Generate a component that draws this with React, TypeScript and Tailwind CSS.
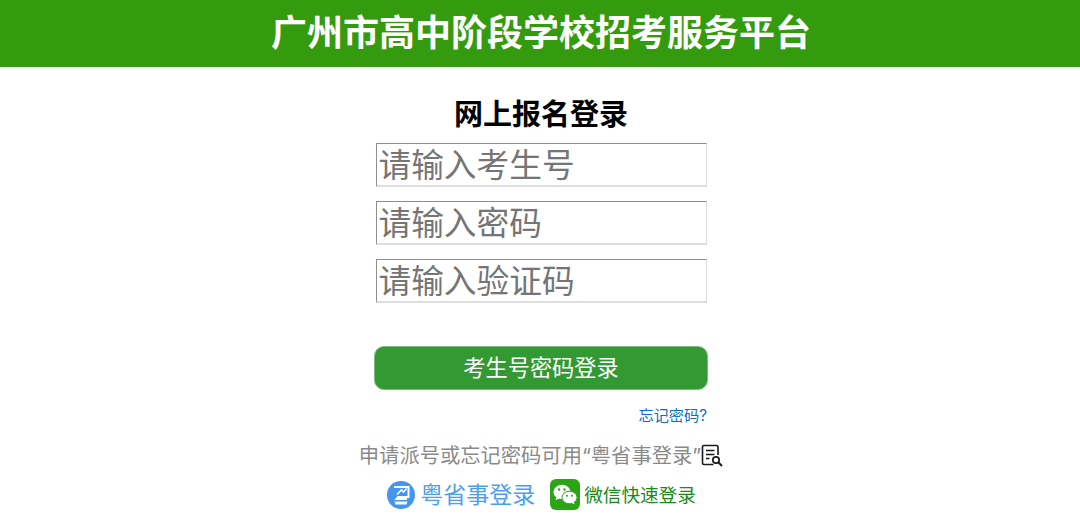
import React from "react";

const FONT = "font-['Inter','Noto_Sans_CJK_SC',sans-serif]";

function Field({ placeholder }: { placeholder: string }) {
  return (
    <input
      placeholder={placeholder}
      className="block h-[44px] w-[331px] border border-b-2 border-t-[#8f8f8f] border-l-[#8f8f8f] border-r-[#dcdcdc] border-b-[#dedede] bg-white pl-[2px] pt-[3px] text-[32.7px] text-black outline-none placeholder:text-[#757575] placeholder:opacity-100"
    />
  );
}

function GuideIcon() {
  return (
    <svg width="23" height="24" viewBox="0 0 23 24" fill="none" stroke="#1a1a1a" className="shrink-0">
      <path d="M12.5 20.5H3a1.5 1.5 0 0 1-1.5-1.5V3A1.5 1.5 0 0 1 3 1.5h12.5A1.5 1.5 0 0 1 17 3v8" strokeWidth="1.6" />
      <path d="M5 6.5h8.5M5 10.5h8.5M5 14.5h3.5" strokeWidth="1.6" />
      <circle cx="15" cy="16" r="3.2" strokeWidth="1.7" />
      <path d="M17.5 18.5l3.5 3.5" strokeWidth="2" />
    </svg>
  );
}

function YueIcon() {
  return (
    <svg width="28" height="28" viewBox="0 0 28 28" className="shrink-0">
      <circle cx="14" cy="14" r="14" fill="#4595ec" />
      <path d="M7 6h14.5v10H11l-1.5 2H20" fill="none" stroke="#fff" strokeWidth="2" />
      <path d="M10 13.5l4.5-4.5 2 2 3-3.5" fill="none" stroke="#fff" strokeWidth="1.6" />
      <path d="M7.5 20.5h13l-1 3h-11z" fill="#fff" />
    </svg>
  );
}

function WechatIcon() {
  return (
    <svg width="30" height="31" viewBox="0 0 30 31" className="shrink-0">
      <rect width="30" height="31" rx="6" fill="#2ba516" />
      <ellipse cx="12" cy="13" rx="8.6" ry="7.2" fill="#fff" />
      <path d="M6.5 17.5l-.8 3.8 4-2.2z" fill="#fff" />
      <ellipse cx="19.5" cy="18.5" rx="7.6" ry="6.3" fill="#fff" stroke="#2ba516" strokeWidth="1" />
      <path d="M23.5 22.5l1 2.8-3.5-1.6z" fill="#fff" />
      <circle cx="9" cy="10.5" r="1.2" fill="#2ba516" />
      <circle cx="14.5" cy="10.5" r="1.2" fill="#2ba516" />
      <circle cx="17" cy="16.8" r="1" fill="#2ba516" />
      <circle cx="22" cy="16.8" r="1" fill="#2ba516" />
    </svg>
  );
}

export default function App() {
  return (
    <div className={`${FONT} h-[526px] w-[1080px] overflow-hidden bg-white`}>
      <header className="flex h-[67px] items-center justify-center bg-[#349b0f] pb-[2px] pl-[2px] text-[36px] font-semibold leading-none text-white">
        广州市高中阶段学校招考服务平台
      </header>
      <main className="flex flex-col items-center pl-[2px]">
        <h1 className="mt-[27px] h-[42px] text-[29px] font-semibold leading-[42px] text-black">网上报名登录</h1>
        <div className="mt-[7px] flex flex-col gap-[14px]">
          <Field placeholder="请输入考生号" />
          <Field placeholder="请输入密码" />
          <Field placeholder="请输入验证码" />
        </div>
        <button className="mt-[43px] h-[44px] w-[334px] rounded-[10px] border border-[#7fb97f] bg-[#339933] text-[22.2px] leading-none text-white">
          考生号密码登录
        </button>
        <div className="mt-[15px] flex w-[334px] justify-end pr-px text-[15.2px] leading-[22px] text-[#0b6fc2]">
          <span>忘记密码?</span>
        </div>
        <div className="mt-[17px] flex items-center pl-[1px] text-[20.3px] leading-[24px] text-[#8a8a8a]">
          <span>申请派号或忘记密码可用“粤省事登录”</span>
          <GuideIcon />
        </div>
        <div className="mt-[11px] flex items-center pl-[1px]">
          <YueIcon />
          <span className="ml-[5px] text-[23px] leading-[30px] text-[#4b9ff0]">粤省事登录</span>
          <span className="ml-[15px]"><WechatIcon /></span>
          <span className="ml-[4px] text-[18.6px] leading-[30px] text-[#178a17]">微信快速登录</span>
        </div>
      </main>
    </div>
  );
}
